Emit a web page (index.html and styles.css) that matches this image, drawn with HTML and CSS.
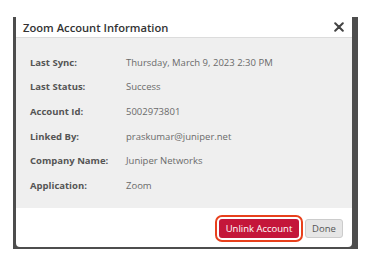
FILE: index.html
```html
<!DOCTYPE html>
<html lang="en">
<head>
    <meta charset="UTF-8">
    <title>Zoom Account Information</title>
    <link rel="stylesheet" href="styles.css">
</head>
<body>
    <div class="backdrop">
        <div class="modal">
            <div class="modal-header">
                <span class="modal-title">Zoom Account Information</span>
                <svg class="close" width="10" height="10" viewBox="0 0 10 10"><path d="M1.2 1.2 L8.8 8.8 M8.8 1.2 L1.2 8.8" stroke="#444" stroke-width="2" stroke-linecap="round"/></svg>
            </div>

            <div class="modal-body">
                <div class="info-row"><span class="label">Last Sync:</span><span class="value">Thursday, March 9, 2023 2:30 PM</span></div>
                <div class="info-row"><span class="label">Last Status:</span><span class="value">Success</span></div>
                <div class="info-row"><span class="label">Account Id:</span><span class="value">5002973801</span></div>
                <div class="info-row"><span class="label">Linked By:</span><span class="value">praskumar@juniper.net</span></div>
                <div class="info-row"><span class="label">Company Name:</span><span class="value">Juniper Networks</span></div>
                <div class="info-row"><span class="label">Application:</span><span class="value">Zoom</span></div>
            </div>

            <div class="modal-footer">
                <button class="btn btn-danger">Unlink Account</button>
                <button class="btn btn-default">Done</button>
            </div>
        </div>
    </div>
</body>
</html>
```

FILE: styles.css
```css
*{
    margin: 0;
    padding: 0;
    box-sizing: border-box;
}
body{
    background: #fff;
    font-family: "Open Sans", "Noto Sans", sans-serif;
}

/*灰色遮罩*/
.backdrop{
    width: 345px;
    margin: 17px 0 0 13px;
    padding: 0 6px 2px 3px;
    background: #4d4d4d;
}

/*弹窗*/
.modal{
    width: 336px;
    background: #fff;
    border-radius: 0 0 4px 4px;
}
.modal-header{
    display: flex;
    justify-content: space-between;
    align-items: center;
    height: 21px;
    padding: 0 8px 0 7px;
    border-bottom: 1px solid #dcdcdc;
}
.modal-title{
    font-size: 11.2px;
    font-weight: 600;
    color: #333;
}
.close{
    display: block;
}

/*信息列表*/
.modal-body{
    background: #efefef;
    padding: 12px 0 10px 14px;
}
.info-row{
    display: flex;
    align-items: center;
    height: 24.6px;
}
.label{
    width: 96px;
    font-size: 9.5px;
    font-weight: 700;
    color: #555;
}
.value{
    font-size: 9.5px;
    color: #6a6a6a;
}

/*按钮*/
.modal-footer{
    display: flex;
    justify-content: flex-end;
    gap: 6px;
    padding: 11px 9px 9px 0;
    border-radius: 0 0 4px 4px;
}
.btn{
    height: 19px;
    padding: 0;
    font-family: inherit;
    font-size: 9.5px;
    border-radius: 3px;
    border: 1px solid transparent;
}
.btn-danger{
    width: 80px;
    background: #c4163a;
    color: #fff;
    outline: 2px solid #e8401c;
    outline-offset: 2px;
}
.btn-default{
    width: 38px;
    background: #e6e6e6;
    border-color: #ccc;
    color: #555;
}
```
